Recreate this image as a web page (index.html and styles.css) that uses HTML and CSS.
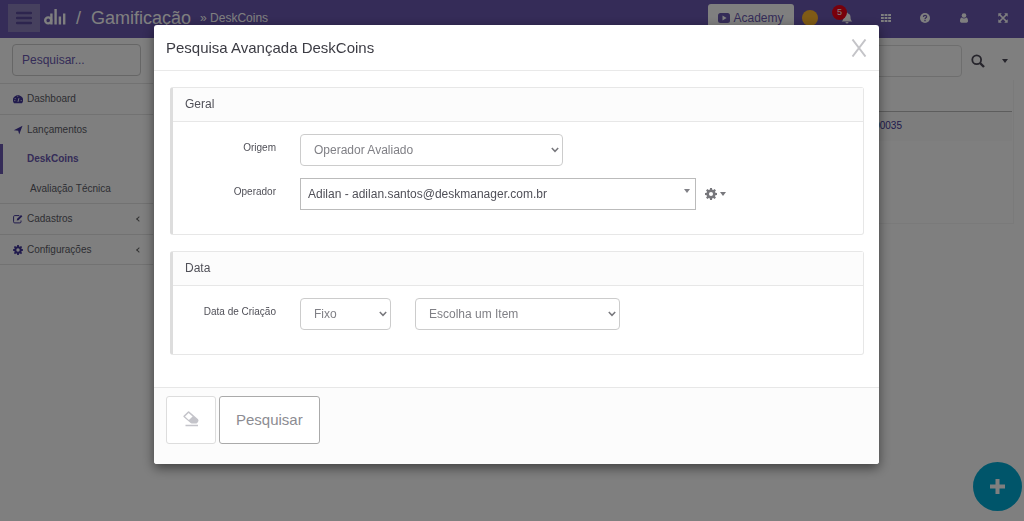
FILE: index.html
```html
<!DOCTYPE html>
<html lang="pt-BR">
<head>
<meta charset="utf-8">
<meta name="viewport" content="width=device-width, initial-scale=1">
<title>Gamificação » DeskCoins</title>
<link rel="stylesheet" href="styles.css">
</head>
<body>
<header class="topbar">
  <button class="menu-toggle" type="button" aria-label="Menu">
    <svg width="16" height="14" viewBox="0 0 16 14"><path d="M1 2h14M1 7h14M1 12h14" stroke="#5a4a9c" stroke-width="2.4" stroke-linecap="round"/></svg>
  </button>
  <a class="logo" href="#" aria-label="Início">
    <svg width="22" height="16" viewBox="0 0 22 16" fill="none" stroke="currentColor" stroke-width="2.4"><circle cx="4.2" cy="11.4" r="3"/><path d="M7.4 4.5v11.1M11.6 0v15.6M15.9 7.5v8.1M20.2 4.5v11.1"/></svg>
  </a>
  <h1 class="page-title">/ <span class="page-name">Gamificação</span></h1>
  <span class="crumb">» DeskCoins</span>
  <nav class="tools">
    <a class="academy" href="#">
      <svg width="12" height="10" viewBox="0 0 12 10"><rect y="0" width="12" height="10" rx="2.5" fill="currentColor"/><path d="M4.5 2.6v4.8L8.6 5z" fill="#fff"/></svg>Academy</a>
    <span class="coin"></span>
    <button class="tool" type="button" aria-label="Notificações">
      <svg width="12" height="12" viewBox="0 0 12 12" fill="currentColor"><path d="M6 .5c.6 0 .9.4.9.9C8.700 1.900 9.500 3.200 9.500 5c0 2.300.6 3.400 1.800 4.500H.7C1.900 8.400 2.500 7.300 2.500 5c0-1.800.8-3.100 2.600-3.600 0-.5.3-.9.900-.9zM4.500 10h3a1.500 1.500 0 0 1-3 0z"/></svg>
      <span class="badge">5</span>
    </button>
    <button class="tool" type="button" aria-label="Aplicativos">
      <svg width="10" height="8" viewBox="0 0 10 8" fill="currentColor"><path d="M0 0h2.800v2H0zM3.600 0h2.800v2H3.600zM7.200 0H10v2H7.200zM0 3h2.800v2H0zM3.600 3h2.800v2H3.600zM7.200 3H10v2H7.200zM0 6h2.800v2H0zM3.600 6h2.800v2H3.600zM7.200 6H10v2H7.200z"/></svg>
    </button>
    <button class="tool" type="button" aria-label="Ajuda">
      <svg width="10" height="10" viewBox="0 0 10 10"><circle cx="5" cy="5" r="5" fill="currentColor"/><path d="M3.400 3.900C3.500 1.900 6.700 2 6.600 3.900 6.500 4.900 5 4.800 5 6.200M5 7v1.200" fill="none" stroke="#6a58b0" stroke-width="1.300"/></svg>
    </button>
    <button class="tool" type="button" aria-label="Usuário">
      <svg width="8" height="10" viewBox="0 0 8 10" fill="currentColor"><circle cx="4" cy="2.500" r="2.300"/><path d="M1.600 4.400C.3 5 0 6.500 0 8c0 1.200.7 1.700 1.500 1.700h5C7.300 9.700 8 9.200 8 8c0-1.500-.3-3-1.600-3.600C5 5.700 3 5.700 1.600 4.400z"/></svg>
    </button>
    <button class="tool" type="button" aria-label="Tela cheia">
      <svg width="10" height="10" viewBox="0 0 10 10" fill="currentColor"><path d="M.3.300h3.500L.3 3.800zM9.700.300v3.500L6.200.300zM.3 9.700V6.200l3.500 3.500zM9.700 9.700H6.200l3.500-3.500z"/><path d="M1.500 1.500l7 7M8.500 1.500l-7 7" stroke="currentColor" stroke-width="1.700"/></svg>
    </button>
  </nav>
</header>

<div class="layout">
  <aside class="sidebar">
    <div class="side-search"><input class="field side-input" type="text" placeholder="Pesquisar..." aria-label="Pesquisar"></div>
    <a class="item" href="#">
      <svg width="10" height="10" viewBox="0 0 10 10"><path d="M1 9.200a5 5 0 1 1 8 0z" fill="currentColor"/><path d="M5 7.800l.9-3.600M2.200 4.200v.9M4.300 2.200h.9M1.300 6.600h1M7.700 6.600h1" stroke="#fff" stroke-width=".9"/></svg>Dashboard</a>
    <div class="group">
      <a class="item" href="#">
        <svg width="10" height="10" viewBox="0 0 10 10" fill="currentColor"><path d="M9.500.8L6.200 9.600 5.200 5.700.8 5.200z"/></svg>Lançamentos</a>
      <a class="subitem active" href="#">DeskCoins</a>
      <a class="subitem" href="#">Avaliação Técnica</a>
    </div>
    <a class="item" href="#">
      <svg width="10" height="10" viewBox="0 0 10 10" fill="none" stroke="currentColor"><path d="M6.300 1.600H1.700Q.6 1.600.6 2.700v5.100q0 1.100 1.100 1.100h5.200Q8 8.900 8 7.800V6.500"/><path d="M3.700 6.600l.4-1.800L8 .9l1.400 1.400-3.900 3.900z" fill="currentColor" stroke="none"/></svg>Cadastros<span class="arrow"></span></a>
    <a class="item" href="#">
      <svg width="10" height="10" viewBox="0 0 16 16"><use href="#gear"/></svg>Configurações<span class="arrow"></span></a>
  </aside>
  <main class="content">
    <div class="list-search">
      <input class="field" type="text" aria-label="Buscar na lista">
      <button class="plain" type="button" aria-label="Buscar">
        <svg width="14" height="14" viewBox="0 0 14 14" fill="none" stroke="currentColor" stroke-width="1.800"><circle cx="5.700" cy="5.700" r="4.400"/><path d="M9 9l4 4" stroke-width="2.400"/></svg>
      </button>
      <button class="plain" type="button" aria-label="Opções"><span class="caret"></span></button>
    </div>
    <section class="list-panel">
      <table class="list">
        <thead><tr><th></th></tr></thead>
        <tbody><tr><td>0000035</td></tr></tbody>
      </table>
    </section>
  </main>
</div>
<button class="fab" type="button" aria-label="Adicionar">
  <svg width="15" height="15" viewBox="0 0 15 15"><path d="M7.500 0v15M0 7.500h15" stroke="#fff" stroke-width="4"/></svg>
</button>

<div class="backdrop">
  <form class="modal" role="dialog" aria-labelledby="modal-title">
    <div class="modal-head">
      <h2 class="modal-title" id="modal-title">Pesquisa Avançada DeskCoins</h2>
      <button class="close" type="button" aria-label="Fechar">
        <svg width="16" height="18" viewBox="0 0 16 18" fill="none" stroke="currentColor" stroke-width="2"><path d="M1.500.5l13 17M14.500.5l-13 17"/></svg>
      </button>
    </div>
    <div class="modal-body">
      <section class="card">
        <h3 class="card-head">Geral</h3>
        <div class="card-body">
          <div class="row">
            <label class="label" for="origem">Origem</label>
            <span class="pick pick-origin">
              <select class="field" id="origem"><option>Operador Avaliado</option></select>
              <svg class="chevron" width="8" height="6" viewBox="0 0 8 6"><path d="M.8 1L4 4.300 7.200 1"/></svg>
            </span>
          </div>
          <div class="row">
            <label class="label" for="operador">Operador</label>
            <span class="pick pick-operator">
              <select class="field" id="operador"><option>Adilan - adilan.santos@deskmanager.com.br</option></select>
              <span class="caret"></span>
            </span>
            <button class="plain gear" type="button" aria-label="Opções do operador">
              <svg width="12" height="12" viewBox="0 0 16 16"><path id="gear" fill="currentColor" fill-rule="evenodd" d="M6.700 0h2.600l.4 2.200 1.300.5L12.800 1.400l1.800 1.800-1.300 1.800.5 1.300 2.200.4v2.600l-2.200.4-.5 1.300 1.300 1.800-1.800 1.800-1.800-1.300-1.300.5-.4 2.200H6.700l-.4-2.200-1.300-.5-1.800 1.300-1.800-1.800L2.700 11l-.5-1.300L0 9.300V6.700l2.200-.4L2.700 5 1.400 3.200l1.800-1.800L5 2.700l1.300-.5zM8 5.300a2.700 2.700 0 1 0 0 5.400 2.700 2.700 0 0 0 0-5.400z"/></svg>
              <span class="caret"></span>
            </button>
          </div>
        </div>
      </section>
      <section class="card">
        <h3 class="card-head">Data</h3>
        <div class="card-body">
          <div class="row">
            <label class="label" for="criacao">Data de Criação</label>
            <span class="pick pick-mode">
              <select class="field" id="criacao"><option>Fixo</option></select>
              <svg class="chevron" width="8" height="6" viewBox="0 0 8 6"><path d="M.8 1L4 4.300 7.200 1"/></svg>
            </span>
            <span class="pick pick-item">
              <select class="field" aria-label="Período de criação"><option>Escolha um Item</option></select>
              <svg class="chevron" width="8" height="6" viewBox="0 0 8 6"><path d="M.8 1L4 4.300 7.200 1"/></svg>
            </span>
          </div>
        </div>
      </section>
    </div>
    <div class="modal-foot">
      <button class="btn btn-clear" type="reset" aria-label="Limpar">
        <svg width="18" height="18" viewBox="0 0 18 18"><path d="M1.600 5.800L6 1.500q.6-.5 1.200 0l8.600 7.500q1.300 1.200.4 2.600l-.8 1.200q-.4.600-1.200.6H9.600q-.6 0-1-.4L1.600 7q-.6-.6 0-1.200z" fill="currentColor"/><path d="M3 6.400l3.600-3.500 4 3.500-3.700 3.600z" fill="#fff"/><path d="M3.500 15.500h12.500" stroke="currentColor" stroke-width="1.400"/></svg>
      </button>
      <button class="btn btn-search" type="submit">Pesquisar</button>
    </div>
  </form>
</div>
</body>
</html>
```
FILE: styles.css
```css
* { box-sizing: border-box; }
body {
  margin: 0;
  min-height: 100vh;
  background: #fff;
  color: #555;
  font: 12px/16px "Liberation Sans", Arial, sans-serif;
}
button, input, select { font: inherit; color: inherit; }
button { padding: 0; border: 0; background: none; cursor: pointer; }
a { color: inherit; text-decoration: none; }
h1, h2, h3 { margin: 0; font-weight: 400; }
svg { display: block; flex: none; }

.topbar {
  display: flex;
  align-items: center;
  height: 38px;
  padding: 0 2px 2px 8px;
  background: #6a58b0;
  color: #fff;
}
.menu-toggle {
  display: grid;
  place-items: center;
  width: 32px;
  height: 28px;
  background: #8c80bc;
}
.logo { margin: 0 10px 2px 4px; }
.page-title { display: flex; gap: 10px; font-size: 18px; line-height: 20px; }
.crumb { margin-left: 9px; }
.tools { display: flex; align-items: center; margin-left: auto; }
.academy {
  display: flex;
  align-items: center;
  justify-content: center;
  gap: 3px;
  width: 86px;
  height: 28px;
  border-radius: 3px;
  background: #fff;
  color: #6a58b0;
}
.coin {
  width: 16px;
  height: 16px;
  margin: 0 9px 0 8px;
  border-radius: 50%;
  background: #ffb62c;
}
.tool { position: relative; display: grid; place-items: center; width: 39px; height: 28px; }
.badge {
  position: absolute;
  top: 1px;
  left: 5px;
  width: 15px;
  border-radius: 50%;
  background: #f00016;
  font-size: 9px;
  line-height: 15px;
}

.layout { display: grid; grid-template-columns: 153px 1fr; min-height: calc(100vh - 38px); }
.sidebar { color: #5c5c66; font-size: 10px; }
.side-search { height: 45px; padding: 6px 12px 0; }
.field {
  width: 100%;
  height: 32px;
  padding: 0 13px;
  border: 1px solid #ccc;
  border-radius: 4px;
  background: #fff;
  appearance: none;
}
.side-input { padding: 0 9px; font-size: 12px; }
.side-input::placeholder { color: #6a58b0; opacity: 1; }
.item {
  display: flex;
  align-items: center;
  gap: 4px;
  height: 29px;
  padding: 0 12px 0 13px;
  line-height: 12px;
}
.item svg { color: #42369a; }
.sidebar > .item, .group { border-top: 1px solid #e4e4e4; }
.sidebar > .item { height: 31px; }
.sidebar > .item:last-child { border-bottom: 1px solid #e4e4e4; }
.subitem { display: flex; align-items: center; height: 29px; padding-left: 30px; line-height: 12px; }
.active {
  height: 30px;
  padding-left: 24px;
  border-left: 3px solid #6a58b0;
  color: #6a58b0;
  font-weight: 700;
}
.arrow {
  width: 4px;
  height: 4px;
  margin-left: auto;
  border: solid #666;
  border-width: 0 0 1px 1px;
  transform: rotate(45deg);
}

.content { padding: 7px 10px 0 16px; }
.list-search { display: flex; align-items: center; }
.list-search .field { flex: 1; min-width: 0; border-color: #ddd; }
.plain { display: flex; align-items: center; gap: 3px; margin-left: 9px; color: #4d4a58; }
.list-search .plain:last-child { margin: 0 6px 0 17px; }
.caret {
  width: 6px;
  height: 4px;
  background: currentColor;
  clip-path: polygon(0 0, 100% 0, 50% 100%);
}
.list-panel { height: 144px; margin-top: 3px; padding-right: 1px; border: solid #f4f4f4; border-width: 0 1px 1px; }
.list { width: 100%; border-collapse: collapse; font-size: 10px; color: #42369a; }
.list th { height: 31px; padding: 0; border-bottom: 1px solid #bbb; }
.list td { height: 30px; padding: 0 110px 0 0; background: #fafafa; text-align: right; }
.fab {
  position: fixed;
  right: 2px;
  bottom: 10px;
  display: grid;
  place-items: center;
  width: 49px;
  height: 49px;
  border-radius: 50%;
  background: #00aad4;
}

.backdrop {
  position: fixed;
  inset: 0;
  overflow: auto;
  padding: 25px 145px 25px 154px;
  background: rgba(0, 0, 0, .5);
}
.modal {
  overflow: hidden;
  border-radius: 3px;
  background: #fff;
  box-shadow: 0 4px 12px rgba(0, 0, 0, .5);
}
.backdrop .modal { color: #505058; }
.modal-head {
  display: flex;
  align-items: center;
  justify-content: space-between;
  height: 46px;
  padding: 0 12px;
  border-bottom: 1px solid #e9e9e9;
}
.modal-title { color: #3c3c44; font-size: 15px; line-height: 20px; }
.close { color: #c4c4c8; }
.modal-body { display: grid; gap: 16px; padding: 16px 15px 32px 16px; }
.card { border: 1px solid #e7e7e7; border-left: 3px solid #ddd; border-radius: 3px; }
.card-head {
  padding: 8px 12px;
  border-bottom: 1px solid #e7e7e7;
  background: #fcfcfc;
  font-size: 12px;
  line-height: 17px;
}
.card-body { display: grid; gap: 12px; padding: 12px 16px 24px 0; }
.row { display: flex; }
.label {
  width: 103px;
  margin-right: 24px;
  padding-top: 8px;
  font-size: 10px;
  line-height: 12px;
  text-align: right;
}
.pick { position: relative; color: #808086; }
.pick-origin { width: 263px; }
.pick-operator { width: 396px; color: #505058; }
.pick-operator .field { padding: 0 7px; border-color: #bbb; border-radius: 0; }
.pick-operator .caret { position: absolute; top: 11px; right: 6px; color: #808086; }
.pick-mode { width: 91px; margin-right: 24px; }
.pick-item { width: 205px; }
.chevron { position: absolute; top: 13px; right: 4px; fill: none; stroke: #77777c; stroke-width: 1.5; pointer-events: none; }
.gear { color: #77777c; }
.modal-foot {
  display: flex;
  gap: 3px;
  padding: 8px 12px 20px;
  border-top: 1px solid #e7e7e7;
  background: #fcfcfc;
}
.btn {
  display: grid;
  place-items: center;
  height: 48px;
  border: 1px solid #ddd;
  border-radius: 3px;
  background: #fff;
}
.btn-clear { width: 50px; padding-bottom: 2px; color: #c4c4ca; }
.btn-search { padding: 0 16px; border-color: #aaa; color: #8c8c92; font-size: 15px; }
```
